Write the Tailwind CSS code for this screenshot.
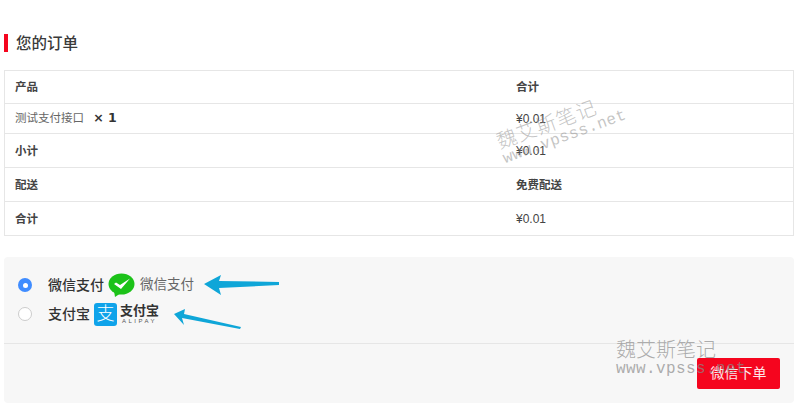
<!DOCTYPE html>
<html lang="zh">
<head>
    <meta charset="UTF-8">
    <title>您的订单</title>
    <script src="https://cdn.jsdelivr.net/npm/@tailwindcss/browser@4"></script>
</head>
<body class="bg-white h-[419px] w-[800px] overflow-hidden relative font-['Liberation_Sans','Noto_Sans_CJK_SC',sans-serif] text-[#333]">

    <div class="pl-1 pr-[6px] pt-[34px]">
        <!-- heading -->
        <h2 class="border-l-4 border-[#f5051e] pl-2 h-[18px] leading-[19px] text-[15.5px] font-medium text-[#3a3a3a]">您的订单</h2>

        <!-- order table -->
        <div class="mt-[18px] border border-[#e6e6e6] text-[11.5px] h-[166px] flex flex-col">
            <div class="flex items-center h-[33px] pt-[2px] font-bold text-[#444] border-b border-[#e6e6e6]">
                <div class="w-[511px] pl-[10px]">产品</div>
                <div>合计</div>
            </div>
            <div class="flex items-center h-[30px] border-b border-[#e6e6e6]">
                <div class="w-[511px] pl-[10px] text-[#666]">测试支付接口 <b class="ml-[6px] text-[12.500px] text-[#333] font-['DejaVu_Sans',sans-serif]">× 1</b></div>
                <div class="text-[12px] text-[#444]">¥0.01</div>
            </div>
            <div class="flex items-center h-[34px] font-bold text-[#444] border-b border-[#e6e6e6]">
                <div class="w-[511px] pl-[10px] pt-[2px]">小计</div>
                <div class="font-normal text-[12px]">¥0.01</div>
            </div>
            <div class="flex items-center h-[34px] pt-[2px] font-bold text-[#444] border-b border-[#e6e6e6]">
                <div class="w-[511px] pl-[10px]">配送</div>
                <div>免费配送</div>
            </div>
            <div class="flex items-center flex-1 font-bold text-[#444]">
                <div class="w-[511px] pl-[10px] pt-[2px]">合计</div>
                <div class="font-normal text-[12px]">¥0.01</div>
            </div>
        </div>

        <!-- payment box -->
        <div class="mt-[21px] bg-[#f7f7f7] rounded-[4px] h-[146px]">
            <div class="h-[87px] border-b border-[#e6e6e6] pt-[14px] pl-[14px] flex flex-col text-[14px]">
                <div class="flex items-center h-[28px]">
                    <span class="w-[14px] h-[14px] rounded-full bg-[#3f8cff] flex items-center justify-center">
                        <span class="w-[5px] h-[5px] rounded-full bg-white"></span>
                    </span>
                    <span class="ml-4 font-medium text-[#333]">微信支付</span>
                    <svg class="ml-[4px]" width="27" height="25" viewBox="0 0 27 25">
                        <ellipse cx="13.5" cy="11" rx="13" ry="10.6" fill="#1cc219"/>
                        <path d="M6 18l1 6 6-4z" fill="#1cc219"/>
                        <path d="M6 11l2-1.500 4 2.500 10-6.500-9 10.500z" fill="#fff"/>
                    </svg>
                    <span class="ml-[5px] text-[13.5px] text-[#666]">微信支付</span>
                </div>
                <div class="flex items-center h-[30px]">
                    <span class="w-[14px] h-[14px] rounded-full bg-white border border-[#ccc]"></span>
                    <span class="ml-4 font-medium text-[#333]">支付宝</span>
                    <span class="ml-[4px] w-[23px] h-[23px] rounded-[3px] bg-[#0fa3ea] flex items-center justify-center text-white text-[18px] font-light leading-none">支</span>
                    <span class="ml-[3px] flex flex-col items-center text-[#333]">
                        <span class="text-[13px] leading-[14px] font-bold">支付宝</span>
                        <span class="text-[6px] leading-[7px] tracking-[2.500px] text-[#555]">ALIPAY</span>
                    </span>
                </div>
            </div>
            <div class="flex justify-end pr-[14px] pt-[14px]">
                <button class="w-[83px] h-[31px] bg-[#f5051e] text-white/90 text-[14px] rounded-[2px]">微信下单</button>
            </div>
        </div>
    </div>

    <!-- arrows -->
    <svg class="absolute left-0 top-0 pointer-events-none" width="800" height="419">
        <path d="M204 284l17-9-2 6 60 1 0 3-60 3 2 7z" fill="#0fa6d8"/>
        <path d="M174 314l11-5-1 5 57 13-1 2-58-11 2 7z" fill="#0fa6d8"/>
    </svg>

    <!-- watermarks -->
    <div class="absolute left-[500px] top-[131px] -rotate-[20deg] origin-left text-[#8a8a8a]/50 pointer-events-none leading-none">
        <div class="text-[20px] tracking-[1px] font-['Noto_Sans_CJK_SC',sans-serif] font-light">魏艾斯笔记</div>
        <div class="text-[16px] tracking-[0.4px] mt-[1px] font-['Liberation_Mono',monospace] whitespace-nowrap">www.vpsss.net</div>
    </div>
    <div class="absolute left-[616px] top-[339px] text-[#8a8a8a]/70 pointer-events-none leading-none">
        <div class="text-[20px] font-['Noto_Sans_CJK_SC',sans-serif] font-light">魏艾斯笔记</div>
        <div class="text-[16px] mt-[2px] tracking-[0.4px] font-['Liberation_Mono',monospace] whitespace-nowrap">www.vpsss.net</div>
    </div>

</body>
</html>
